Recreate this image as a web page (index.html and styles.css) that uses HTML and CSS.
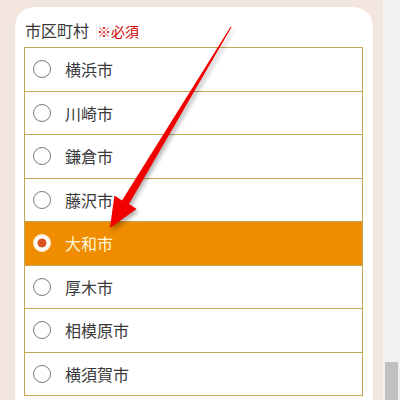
FILE: index.html
```html
<!DOCTYPE html>
<html lang="ja">
<head>
<meta charset="utf-8">
<link rel="stylesheet" href="styles.css">
</head>
<body>
<div class="page">
  <main class="main">
    <section class="card">
      <div class="label">市区町村<span class="req">※必須</span></div>
      <ul class="list">
        <li class="row"><span class="radio"></span><span class="name">横浜市</span></li>
        <li class="row"><span class="radio"></span><span class="name">川崎市</span></li>
        <li class="row"><span class="radio"></span><span class="name">鎌倉市</span></li>
        <li class="row"><span class="radio"></span><span class="name">藤沢市</span></li>
        <li class="row selected"><span class="radio"></span><span class="name">大和市</span></li>
        <li class="row"><span class="radio"></span><span class="name">厚木市</span></li>
        <li class="row"><span class="radio"></span><span class="name">相模原市</span></li>
        <li class="row"><span class="radio"></span><span class="name">横須賀市</span></li>
      </ul>
    </section>
  </main>
  <div class="scrollbar"><div class="thumb"></div></div>
</div>
<svg class="arrow" width="400" height="400" viewBox="0 0 400 400">
  <polygon points="231.9,26.5 230.1,27.5 122,200.5 114.4,195.6 110,228 136.6,209 129,204.1" fill="#f20000"/>
</svg>
</body>
</html>
```

FILE: styles.css
```css
html, body {
  margin: 0;
  padding: 0;
  width: 400px;
  height: 400px;
  overflow: hidden;
  font-family: "Noto Sans CJK JP", "Noto Sans", sans-serif;
}
.page {
  display: flex;
  width: 400px;
  height: 400px;
}
.main {
  width: 383px;
  height: 400px;
  background: #f3e6de;
  padding: 7px 0 0 15px;
  box-sizing: border-box;
}
.card {
  width: 358px;
  height: 393px;
  background: #fff;
  border-radius: 20px 20px 0 0;
  padding: 12px 10px 0 9px;
  box-sizing: border-box;
}
.label {
  height: 28px;
  font-size: 16px;
  line-height: 22px;
  color: #3a3a3a;
  padding-left: 1px;
}
.req {
  color: #d40000;
  font-size: 14px;
  margin-left: 8px;
}
.list {
  list-style: none;
  margin: 0;
  padding: 0;
  border: 1px solid #c4a552;
  border-bottom: none;
}
.row {
  display: flex;
  align-items: center;
  height: 42.5px;
  border-bottom: 1px solid #c4a552;
  padding-left: 8px;
  background: #fff;
}
.radio {
  width: 16px;
  height: 16px;
  border: 1px solid #7a7a7a;
  border-radius: 50%;
  background: #fff;
  flex: none;
  box-sizing: content-box;
}
.name {
  margin-left: 14px;
  font-size: 16px;
  color: #3a3a3a;
}
.row.selected {
  background: #ef8c00;
}
.row.selected .name {
  color: #fff6d6;
}
.row.selected .radio {
  width: 14px;
  height: 14px;
  border: 2px solid #fff2dc;
  background: radial-gradient(circle, #d9531e 0 4.2px, #fff 4.8px);
}
.scrollbar {
  width: 17px;
  height: 400px;
  background: #f1f1f1;
  display: flex;
  flex-direction: column;
  justify-content: flex-end;
  align-items: center;
}
.thumb {
  width: 13px;
  height: 38px;
  background: #c1c1c1;
}
.arrow {
  position: absolute;
  left: 0;
  top: 0;
  filter: drop-shadow(2px 3px 2px rgba(0,0,0,0.3));
}
```
